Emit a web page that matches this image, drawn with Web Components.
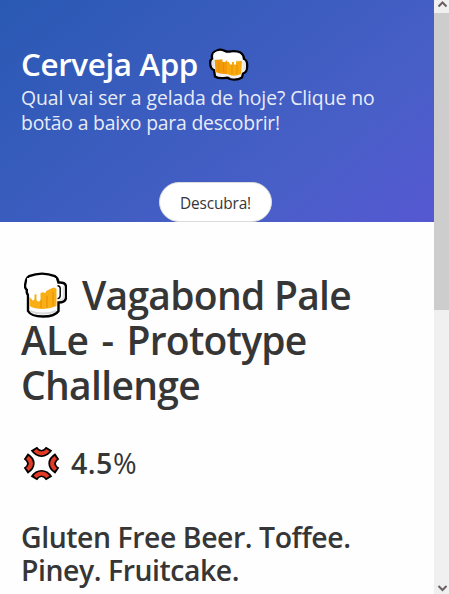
<!DOCTYPE html>
<html lang="pt-BR">
<head>
<meta charset="utf-8">
<title>Cerveja App</title>
<style>
html,body{margin:0;height:100%;overflow:hidden;background:#fefefe}
body{font-family:"Open Sans","Noto Sans",sans-serif;color:#363636}
</style>
</head>
<body>
<app-shell>
  <app-hero>
    <text-line slot="title" fit="177">Cerveja App</text-line>
    <beer-mugs slot="title"></beer-mugs>
    <text-line slot="subtitle" fit="353.5">Qual vai ser a gelada de hoje? Clique no</text-line>
    <text-line slot="subtitle" fit="259">botão a baixo para descobrir!</text-line>
    <pill-button slot="action"><text-line fit="71">Descubra!</text-line></pill-button>
  </app-hero>
  <beer-details>
    <beer-mug slot="name"></beer-mug>
    <text-line slot="name" fit="269">Vagabond Pale</text-line>
    <text-line slot="more" fit="285.5" style="word-spacing:4px">ALe - Prototype</text-line>
    <text-line slot="more" fit="179">Challenge</text-line>
    <anger-mark slot="abv"></anger-mark>
    <text-line slot="abv" fit="66">4.5<span style="font-weight:400">%</span></text-line>
    <text-line slot="tagline" fit="329.5">Gluten Free Beer. Toffee.</text-line>
    <text-line slot="tagline" fit="218">Piney. Fruitcake.</text-line>
  </beer-details>
  <scroll-bar slot="scroll"></scroll-bar>
</app-shell>
<script>
function define(name, html, ready) {
  const t = document.createElement('template');
  t.innerHTML = html;
  customElements.define(name, class extends HTMLElement {
    constructor() {
      super();
      this.attachShadow({mode: 'open'}).append(t.content.cloneNode(true));
    }
    connectedCallback() { if (ready) ready(this); }
  });
}

define('app-shell', `<style>
:host{display:grid;grid-template-columns:1fr 15px;height:100vh;overflow:hidden}
main{min-width:0;overflow:hidden}
</style><main><slot></slot></main><slot name="scroll"></slot>`);

define('app-hero', `<style>
:host{display:flex;flex-direction:column;box-sizing:border-box;height:222px;padding:46px 21px 0;
 background:linear-gradient(141deg,#2959b3 0%,#485fc7 71%,#5658d2 100%);color:#fff}
.title{display:flex;height:39px;font-size:31.4px;line-height:36px;font-weight:600}
.sub{font-size:19.4px;line-height:25px;color:rgba(255,255,255,.9)}
.action{display:flex;justify-content:center;margin-top:auto;padding-right:3px}
</style><div class="title"><slot name="title"></slot></div>
<div class="sub"><slot name="subtitle"></slot></div>
<div class="action"><slot name="action"></slot></div>`);

define('pill-button', `<style>
:host{display:block}
button{display:flex;align-items:center;justify-content:center;box-sizing:border-box;width:113px;height:40px;padding:4px 0 0;
 border:1px solid #dbdbdb;border-radius:20px;background:#fff;color:#363636;font:400 15.4px/24px "Open Sans","Noto Sans",sans-serif}
</style><button><slot></slot></button>`);

define('beer-details', `<style>
:host{display:block;padding:50px 21px 0;font-weight:600}
.name{font-size:39px;line-height:45px}
.row{display:flex}
.abv{display:flex;margin-top:40px;font-size:28.6px;line-height:32px}
.tag{margin-top:42px;font-size:28.4px;line-height:33px}
</style><div class="name"><div class="row"><slot name="name"></slot></div><slot name="more"></slot></div>
<div class="abv"><slot name="abv"></slot></div>
<div class="tag"><slot name="tagline"></slot></div>`);

// A single line of text whose tracking is adjusted to the width in "fit".
define('text-line', `<style>
:host{display:block;white-space:nowrap}
span{display:inline-block}
</style><span><slot></slot></span>`, el => {
  const s = el.shadowRoot.querySelector('span');
  const run = () => {
    s.style.letterSpacing = '0';
    const n = el.textContent.length;
    s.style.letterSpacing = ((+el.getAttribute('fit') - s.getBoundingClientRect().width) / n) + 'px';
  };
  requestAnimationFrame(run);
  document.addEventListener('DOMContentLoaded', run);
});

define('beer-mugs', `<style>:host{display:block;margin:2px 0 0 11px}svg{display:block}</style>
<svg width="40" height="34" viewBox="0 0 40 34">
<path d="M8 2.5Q11 .8 15 2.6Q18 4 20 3.6Q27 2.2 31.5 4.6Q35 7 35 11Q38.3 12 38.2 18Q38.2 24.5 34 25.5L33 29.5Q28 32.6 21 31Q19 29.6 17 29.8Q10 31 6 28.5L5 22Q1.2 21 1.2 15Q1 12 3.2 10.5Q1.5 5 8 2.5Z" fill="#efefef" stroke="#000" stroke-width="2.3" stroke-linejoin="round"/>
<path d="M5.7 12L18 11V26Q11 26.5 6.6 24Z" fill="#f29a08"/>
<path d="M17.5 14L33 13L32 26Q25 29.5 18 26Z" fill="#f8aa0c"/>
<path d="M10 14v10M14.5 14v10M23 17v9M28 17v9" stroke="#e58e0b" stroke-width="1"/>
<path d="M4.5 5.5Q10 1 17 5Q20 7 20 10L17 13L16 14H13.5V11L5 11Z" fill="#fff"/>
<path d="M17 8Q20 4 25 5Q34 4 33 12L27 12V16Q26 18 25 16V14H23V16Q21.5 18 20.5 15L18.5 12Z" fill="#fff"/>
<path d="M4 12v7M35.5 14v8" stroke="#e4e4e4" stroke-width="1.5"/>
</svg>`);

define('beer-mug', `<style>:host{display:block;margin:0 15px 0 3px;height:45px}svg{display:block}</style>
<svg width="43" height="46" viewBox="0 0 43 46">
<path d="M5 4.2Q18 -1 31 4.2Q34 6 34.5 10.5Q42 10 42 15V25Q42 30.5 34.5 30.5V39Q31 44.5 19 44.5Q7 44.5 4 39V23Q2 20 3 18Q0 16 1.5 11Q2 6 5 4.2Z" fill="#fff" stroke="#000" stroke-width="2.4"/>
<path d="M5.5 24L20 20L30 15L32.5 17V34Q26 37 19 37Q10 37 5.5 34Z" fill="#f9ae15"/>
<path d="M17 27v9M23 24v12M29 20v14" stroke="#ed9907" stroke-width="1.6"/>
<path d="M3 6H32V15Q25 16 22 19V20Q20.5 22 19.5 20Q18 19 16.5 20V28Q14.5 31 12.5 28V22Q11.5 21 10.5 23V27Q9 30 7.5 27L5.3 25V21L4 18Z" fill="#fff"/>
<path d="M6 38Q19 43 32 38V40Q19 45 6 40Z" fill="#d9d9d9"/>
<path d="M33.5 13.8Q36.2 14 36.2 16.5V23.5Q36.2 26.5 33.5 26.6" fill="#fff" stroke="#000" stroke-width="1.4"/>
<path d="M39.5 14.5V26Q39 28 35.5 28" fill="none" stroke="#ddd" stroke-width="1.5"/>
</svg>`);

define('anger-mark', `<style>:host{display:block;margin:0 12px 0 3px;height:32px}svg{display:block;overflow:visible}</style>
<svg width="35" height="33" viewBox="0 0 35 35" preserveAspectRatio="none"><defs>
<path id="a" d="M9.9 1.8Q13.2 6.9 17.5 6.9Q21.8 6.9 25.1 1.8"/>
<path id="c" d="M11.1 3.3Q14 6.9 17.5 6.9Q21 6.9 23.9 3.3"/></defs>
<g fill="none" stroke="#000" stroke-width="7.5"><use href="#a"/><use href="#a" transform="rotate(90 17.5 17.5)"/><use href="#a" transform="rotate(180 17.5 17.5)"/><use href="#a" transform="rotate(270 17.5 17.5)"/></g>
<g fill="none" stroke="#e13a26" stroke-width="4"><use href="#c"/><use href="#c" transform="rotate(90 17.5 17.5)"/><use href="#c" transform="rotate(180 17.5 17.5)"/><use href="#c" transform="rotate(270 17.5 17.5)"/></g>
</svg>`);

define('scroll-bar', `<style>
:host{display:grid;grid-template-rows:13px 297px 1fr 13px;background:#f0f0f0}
.thumb{background:#cdcdcd;grid-row:2}
svg{display:block;fill:none;stroke:#6a5f62;stroke-width:2}
.down{grid-row:4}
</style><svg width="15" height="13"><path d="M4.5 6.5L8.5 2.5L12.5 6.5"/></svg><div class="thumb"></div>
<svg class="down" width="15" height="13"><path d="M4.5 5L8.5 9L12.5 5"/></svg>`);
</script>
</body>
</html>
